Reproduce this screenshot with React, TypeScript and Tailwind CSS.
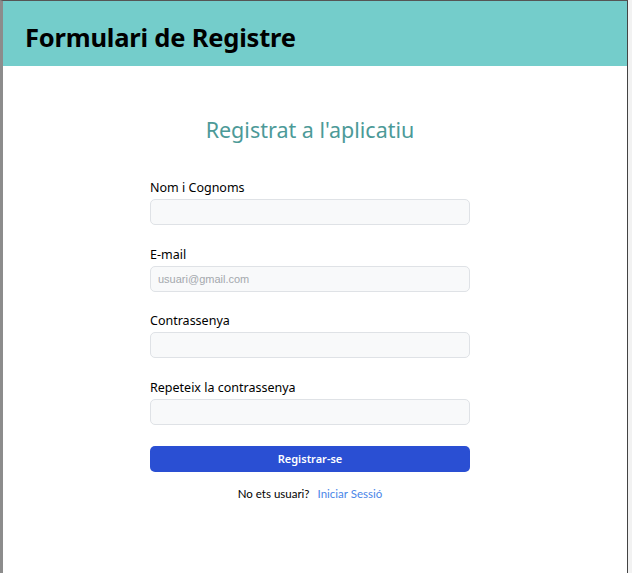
import React from 'react';

const Field: React.FC<{ label: string; type?: string; placeholder?: string }> = ({
  label,
  type = 'text',
  placeholder,
}) => (
  <div className="flex flex-col">
    <label className="mb-[3px] text-[12.5px] leading-[16px] text-black">{label}</label>
    <input
      type={type}
      placeholder={placeholder}
      className="h-[26px] w-full rounded-[5px] border border-[#dfe2e6] bg-[#f8f9fa] px-[7px] text-[11px] text-gray-700 outline-none placeholder:text-[#a4a8ad] [font-family:'Liberation_Sans',Arial,sans-serif]"
    />
  </div>
);

export default function App() {
  return (
    <div className="flex h-[573px] w-[632px] bg-[#f2f2f2] [font-family:'Noto_Sans',Lato,sans-serif]">
      <div className="flex h-full w-[628px] flex-col border-l-[3px] border-r border-t border-l-[#8c8c8c] border-r-[#444] border-t-[#555] bg-white">
        {/* Header */}
        <header className="flex h-[65px] items-center bg-[#74cdcb] px-[22px] pt-[8px]">
          <h1 className="text-[25.5px] font-bold tracking-[-0.2px] text-black">Formulari de Registre</h1>
        </header>

        {/* Body */}
        <main className="flex flex-col items-center pr-[10px]">
          <h2 className="mt-[49px] text-[21.5px] leading-[30px] text-[#4c9a98]">
            Registrat a l'aplicatiu
          </h2>

          <form className="mt-[35px] flex w-[320px] flex-col gap-[21.5px]" onSubmit={(e) => e.preventDefault()}>
            <Field label="Nom i Cognoms" />
            <Field label="E-mail" type="email" placeholder="usuari@gmail.com" />
            <Field label="Contrassenya" type="password" />
            <Field label="Repeteix la contrassenya" type="password" />

            <button
              type="submit"
              className="h-[26px] w-full rounded-[5px] bg-[#2a4fd3] text-[11px] font-semibold text-white"
            >
              Registrar-se
            </button>
          </form>

          <p className="mt-[13px] text-[11.5px] text-black [font-family:Lato,sans-serif]">
            No ets usuari?
            <a href="#" className="ml-[8px] text-[#4a86e8]">
              Iniciar Sessió
            </a>
          </p>
        </main>
      </div>
    </div>
  );
}
